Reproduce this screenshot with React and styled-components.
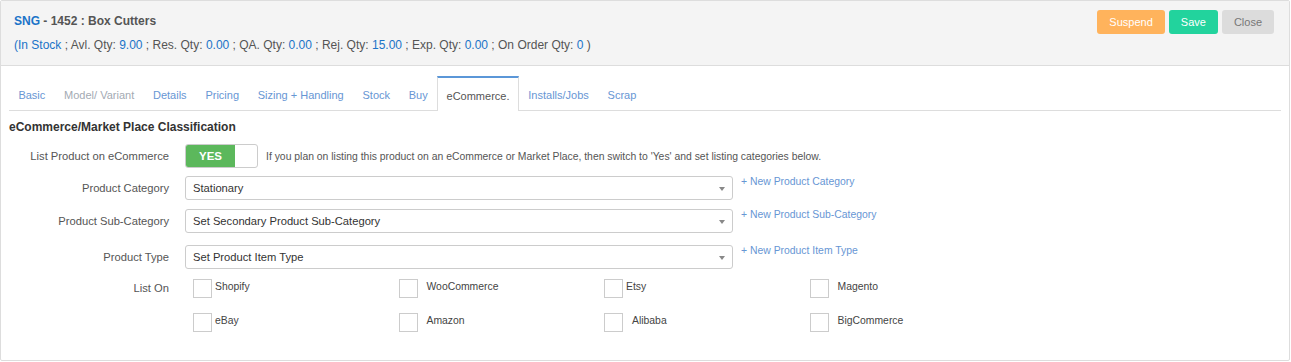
import React from 'react'
import styled, { createGlobalStyle } from 'styled-components'

const GlobalStyle = createGlobalStyle`
    body {
        margin: 0;
        background: #fff;
        font-family: "Liberation Sans", Arial, sans-serif;
        color: #333;
    }
`

const Panel = styled.div`
    width: 1288px;
    border: 1px solid #ddd;
    border-radius: 2px;
    padding-bottom: 28px;
`

const Header = styled.div`
    height: 64px;
    background: #f4f4f4;
    border-bottom: 1px solid #ddd;
    display: flex;
    justify-content: space-between;
    padding: 0 15px 0 13px;
`

const TitleBlock = styled.div`
    padding-top: 13px;
`

const Title = styled.div`
    font-size: 12px;
    font-weight: bold;
    color: #555;
    line-height: 15px;
`

const Code = styled.span`
    color: #1a73c8;
`

const Stats = styled.div`
    margin-top: 9px;
    font-size: 12px;
    color: #555;
    line-height: 15px;
`

const Val = styled.span`
    color: #1a73c8;
`

const Actions = styled.div`
    display: flex;
    gap: 4px;
    padding-top: 9px;
    align-items: flex-start;
`

const Button = styled.button`
    height: 24px;
    padding: 0 12px;
    border: none;
    border-radius: 3px;
    font-family: inherit;
    font-size: 11px;
    color: ${p => p.$text || '#fff'};
    background: ${p => p.$bg};
`

const Body = styled.div`
    padding: 10px 8px 0;
`

const Tabs = styled.div`
    display: flex;
    border-bottom: 1px solid #ddd;
    height: 34px;
`

const Tab = styled.div`
    padding: 4px 9.4px 0;
    font-size: 11px;
    line-height: 30px;
    color: ${p => (p.$active ? '#555' : p.$muted ? '#a3aab3' : '#6796d4')};
    ${p =>
        p.$active &&
        `
        background: #fff;
        border: 1px solid #ddd;
        border-top: 2px solid #5b97d8;
        border-bottom: none;
        box-sizing: border-box;
        padding: 3px 8.4px 0;
        margin-bottom: -1px;
        height: 35px;
    `}
`

const SectionTitle = styled.div`
    margin: 9px 0 10px 0;
    font-size: 12px;
    font-weight: bold;
    color: #333;
`

const Row = styled.div`
    display: flex;
    align-items: ${p => (p.$top ? 'flex-start' : 'center')};
    margin-bottom: ${p => p.$mb ?? 10}px;
`

const Label = styled.div`
    width: 160px;
    flex-shrink: 0;
    text-align: right;
    font-size: 11.2px;
    color: #555;
    padding-right: 16px;
    margin-top: ${p => p.$mt || 0}px;
`

const Toggle = styled.div`
    display: flex;
    width: 71px;
    height: 22px;
    border: 1px solid #ccc;
    border-radius: 3px;
    overflow: hidden;
    background: #fff;
`

const ToggleOn = styled.div`
    width: 49px;
    background: #5cb85c;
    color: #fff;
    font-size: 11.5px;
    font-weight: bold;
    line-height: 22px;
    text-align: center;
`

const Help = styled.div`
    margin-left: 8px;
    font-size: 10.4px;
    color: #555;
`

const Select = styled.div`
    position: relative;
    width: 539px;
    height: 22px;
    border: 1px solid #ccc;
    border-radius: 3px;
    font-size: 11.2px;
    line-height: 22px;
    color: #333;
    padding-left: 7px;
`

const Caret = styled.span`
    position: absolute;
    right: 7px;
    top: 10px;
    width: 0;
    height: 0;
    border-left: 3px solid transparent;
    border-right: 3px solid transparent;
    border-top: 4px solid #888;
`

const AddLink = styled.a`
    margin-left: 8px;
    align-self: flex-start;
    font-size: 10.4px;
    color: #6796d4;
    text-decoration: none;
`

const Checks = styled.div`
    display: grid;
    grid-template-columns: repeat(4, 205.5px);
    row-gap: 15px;
    padding-left: 8px;
`

const CheckItem = styled.label`
    display: flex;
    align-items: flex-start;
    font-size: 10.4px;
    color: #444;
`

const Box = styled.span`
    width: 17px;
    height: 17px;
    border: 1px solid #ccc;
    margin-right: ${p => p.$gap}px;
    flex-shrink: 0;
`

const CheckText = styled.span`
    margin-top: 2px;
`

const tabs = [
    { name: 'Basic' },
    { name: 'Model/ Variant', muted: true },
    { name: 'Details' },
    { name: 'Pricing' },
    { name: 'Sizing + Handling' },
    { name: 'Stock' },
    { name: 'Buy' },
    { name: 'eCommerce.', active: true },
    { name: 'Installs/Jobs' },
    { name: 'Scrap' },
]

const selects = [
    { label: 'Product Category', value: 'Stationary', link: '+ New Product Category', mb: 9 },
    { label: 'Product Sub-Category', value: 'Set Secondary Product Sub-Category', link: '+ New Product Sub-Category', mb: 12 },
    { label: 'Product Type', value: 'Set Product Item Type', link: '+ New Product Item Type', mb: 10 },
]

const markets = [
    ['Shopify', 3], ['WooCommerce', 9], ['Etsy', 3], ['Magento', 9],
    ['eBay', 3], ['Amazon', 9], ['Alibaba', 9], ['BigCommerce', 9],
]

export default function App() {
    return (
        <React.Fragment>
            <GlobalStyle />
            <Panel>
                <Header>
                    <TitleBlock>
                        <Title>
                            <Code>SNG</Code> - 1452 : Box Cutters
                        </Title>
                        <Stats>
                            <Val>(In Stock</Val> ; Avl. Qty: <Val>9.00</Val> ; Res. Qty: <Val>0.00</Val> ; QA. Qty: <Val>0.00</Val> ; Rej. Qty: <Val>15.00</Val> ; Exp. Qty: <Val>0.00</Val> ; On Order Qty: <Val>0</Val> )
                        </Stats>
                    </TitleBlock>
                    <Actions>
                        <Button $bg="#ffb35c">Suspend</Button>
                        <Button $bg="#22d39d">Save</Button>
                        <Button $bg="#dcdcdc" $text="#777">Close</Button>
                    </Actions>
                </Header>
                <Body>
                    <Tabs>
                        {tabs.map(t => (
                            <Tab key={t.name} $active={t.active} $muted={t.muted}>
                                {t.name}
                            </Tab>
                        ))}
                    </Tabs>
                    <SectionTitle>eCommerce/Market Place Classification</SectionTitle>
                    <Row $mb={8}>
                        <Label>List Product on eCommerce</Label>
                        <Toggle>
                            <ToggleOn>YES</ToggleOn>
                        </Toggle>
                        <Help>
                            If you plan on listing this product on an eCommerce or Market Place, then switch to 'Yes' and set listing categories below.
                        </Help>
                    </Row>
                    {selects.map(s => (
                        <Row key={s.label} $mb={s.mb}>
                            <Label>{s.label}</Label>
                            <Select>
                                {s.value}
                                <Caret />
                            </Select>
                            <AddLink href="#">{s.link}</AddLink>
                        </Row>
                    ))}
                    <Row $top $mb={0}>
                        <Label $mt={3}>List On</Label>
                        <Checks>
                            {markets.map(([name, gap]) => (
                                <CheckItem key={name}>
                                    <Box $gap={gap} />
                                    <CheckText>{name}</CheckText>
                                </CheckItem>
                            ))}
                        </Checks>
                    </Row>
                </Body>
            </Panel>
        </React.Fragment>
    )
}
